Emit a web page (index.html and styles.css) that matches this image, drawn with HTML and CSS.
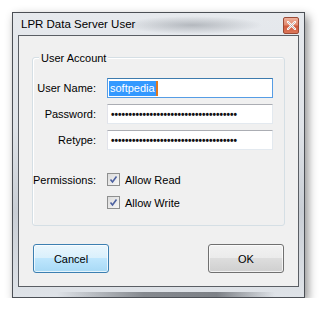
FILE: index.html
```html
<!DOCTYPE html>
<html lang="en">
<head>
  <meta charset="UTF-8" />
  <title>LPR Data Server User</title>
  <link rel="stylesheet" href="styles.css">
</head>
<body>
  <div class="window">
    <div class="titlebar">
      <span class="title">LPR Data Server User</span>
      <span class="close-btn">
        <svg width="9" height="9" viewBox="0 0 9 9">
          <path d="M1 1 L8 8 M8 1 L1 8" stroke="#ffffff" stroke-width="2.2" stroke-linecap="square" />
          <path d="M1 1 L8 8 M8 1 L1 8" stroke="#3a2a28" stroke-width="0.6" opacity="0.5" />
        </svg>
      </span>
    </div>

    <div class="client">
      <div class="group">
        <span class="legend">User Account</span>

        <div class="fields">
          <label>User Name:</label>
          <div class="textbox focused"><span class="selected">softpedia</span><span class="caret"></span></div>

          <label>Password:</label>
          <div class="textbox"><span class="dots">&#8226;&#8226;&#8226;&#8226;&#8226;&#8226;&#8226;&#8226;&#8226;&#8226;&#8226;&#8226;&#8226;&#8226;&#8226;&#8226;&#8226;&#8226;&#8226;&#8226;&#8226;&#8226;&#8226;&#8226;&#8226;&#8226;&#8226;&#8226;&#8226;&#8226;&#8226;&#8226;&#8226;&#8226;&#8226;&#8226;</span></div>

          <label>Retype:</label>
          <div class="textbox"><span class="dots">&#8226;&#8226;&#8226;&#8226;&#8226;&#8226;&#8226;&#8226;&#8226;&#8226;&#8226;&#8226;&#8226;&#8226;&#8226;&#8226;&#8226;&#8226;&#8226;&#8226;&#8226;&#8226;&#8226;&#8226;&#8226;&#8226;&#8226;&#8226;&#8226;&#8226;&#8226;&#8226;&#8226;&#8226;&#8226;&#8226;</span></div>
        </div>

        <div class="perms">
          <label>Permissions:</label>
          <div class="check">
            <span class="box">
              <svg width="11" height="11" viewBox="0 0 11 11"><path d="M2.5 5.5 L4.5 8 L8.5 2.5" fill="none" stroke="#4c61a0" stroke-width="1.6" /></svg>
            </span>
            <span>Allow Read</span>
          </div>

          <span></span>
          <div class="check">
            <span class="box">
              <svg width="11" height="11" viewBox="0 0 11 11"><path d="M2.5 5.5 L4.5 8 L8.5 2.5" fill="none" stroke="#4c61a0" stroke-width="1.6" /></svg>
            </span>
            <span>Allow Write</span>
          </div>
        </div>
      </div>

      <div class="buttons">
        <button class="btn default">Cancel</button>
        <button class="btn">OK</button>
      </div>
    </div>
  </div>
</body>
</html>
```

FILE: styles.css
```css
body {
  margin: 0;
  padding: 0;
  background-color: #ffffff;
  font-family: "Liberation Sans", Arial, sans-serif;
  font-size: 11px;
  color: #000000;
}

.window {
  margin: 12px 0 0 12px;
  width: 281px;
  height: 279px;
  padding: 0 5px 5px;
  border: 1px solid #4b4f55;
  background:
    linear-gradient(to right, rgba(60,64,70,0) 15%, rgba(60,64,70,0.55) 45%, rgba(60,64,70,0.6) 70%, rgba(60,64,70,0) 90%) bottom / 100% 5px no-repeat,
    linear-gradient(to bottom, #e6e9ed 0%, #dfe3e8 40%, #c9ced5 70%, #dfe3e8 100%);
  box-shadow: 3px 4px 9px rgba(0, 0, 0, 0.45);
}

.titlebar {
  height: 22px;
  display: flex;
  align-items: flex-start;
  justify-content: space-between;
  background: radial-gradient(ellipse 70px 9px at 62% 55%, rgba(120,126,134,0.45), rgba(120,126,134,0));
}

.title {
  font-size: 11.5px;
  padding: 5px 0 0 3px;
  color: #000000;
}

.close-btn {
  margin-top: 4px;
  width: 14px;
  height: 15px;
  border: 1px solid #9a4a36;
  border-radius: 2px;
  background: linear-gradient(to bottom, #eeb09b 0%, #e28a6f 45%, #d05a3c 55%, #dc7658 100%);
  display: flex;
  align-items: center;
  justify-content: center;
}

.client {
  height: 250px;
  border: 1px solid #5a5e64;
  background-color: #f0f0f0;
  display: flex;
  flex-direction: column;
}

.group {
  margin: 21px 13px 0;
  height: 167px;
  border: 1px solid #d5dfe5;
  border-radius: 3px;
  box-shadow: inset 1px 1px 0 #ffffff;
}

.legend {
  display: block;
  width: fit-content;
  margin: -7px 0 0 6px;
  padding: 0 2px;
  line-height: 14px;
  height: 14px;
  background-color: #f0f0f0;
}

.fields,
.perms {
  display: grid;
  grid-template-columns: 63px 166px;
  column-gap: 11px;
}

.fields {
  margin-top: 13px;
  grid-auto-rows: 20px;
  row-gap: 6px;
}

.fields label,
.perms label {
  text-align: right;
  align-self: center;
}

.textbox {
  box-sizing: border-box;
  height: 20px;
  border: 1px solid #e3e9ef;
  border-top-color: #abadb3;
  border-left-color: #e2e3ea;
  background-color: #ffffff;
  display: flex;
  align-items: center;
  padding-left: 1px;
}

.textbox.focused {
  border-color: #569de5;
  border-top-color: #3d7bad;
}

.selected {
  background-color: #3399ff;
  color: #ffffff;
  line-height: 15px;
  padding: 0 1px;
}

.caret {
  width: 2px;
  height: 15px;
  background-color: #e07820;
}

.dots {
  font-size: 10px;
  font-weight: bold;
  letter-spacing: 0;
  color: #101010;
  padding-left: 2px;
}

.perms {
  margin-top: 23px;
  grid-auto-rows: 13px;
  row-gap: 10px;
}

.check {
  display: flex;
  align-items: center;
  gap: 5px;
}

.box {
  box-sizing: border-box;
  width: 13px;
  height: 13px;
  border: 1px solid #8e8f8f;
  background: linear-gradient(135deg, #dcdcdc, #f6f6f6);
  display: flex;
  align-items: center;
  justify-content: center;
}

.buttons {
  margin: 18px 14px 0;
  display: flex;
  justify-content: space-between;
}

.btn {
  width: 76px;
  height: 29px;
  font-family: "Liberation Sans", Arial, sans-serif;
  font-size: 11px;
  color: #000000;
  border: 1px solid #707070;
  border-radius: 3px;
  background: linear-gradient(to bottom, #f2f2f2 0%, #ebebeb 49%, #dddddd 50%, #cfcfcf 100%);
  box-shadow: inset 0 0 0 1px rgba(255, 255, 255, 0.7);
  padding: 0;
}

.btn.default {
  border-color: #3c7fb1;
  background: linear-gradient(to bottom, #eaf6fd 0%, #d9f0fc 49%, #bee6fd 50%, #a7d9f5 100%);
}
```
